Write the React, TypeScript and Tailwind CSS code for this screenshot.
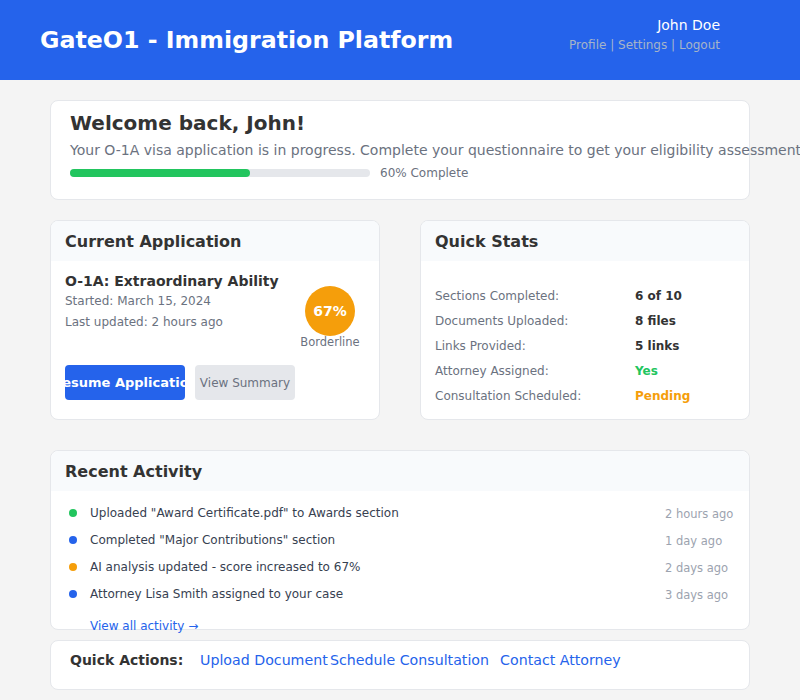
export default function App() {
  const stats = [
    { label: 'Sections Completed:', value: '6 of 10', color: 'text-[#333333]' },
    { label: 'Documents Uploaded:', value: '8 files', color: 'text-[#333333]' },
    { label: 'Links Provided:', value: '5 links', color: 'text-[#333333]' },
    { label: 'Attorney Assigned:', value: 'Yes', color: 'text-[#22c55e]' },
    { label: 'Consultation Scheduled:', value: 'Pending', color: 'text-[#f59e0b]' },
  ]

  const activity = [
    { dot: 'bg-[#22c55e]', text: 'Uploaded "Award Certificate.pdf" to Awards section', time: '2 hours ago' },
    { dot: 'bg-[#2563eb]', text: 'Completed "Major Contributions" section', time: '1 day ago' },
    { dot: 'bg-[#f59e0b]', text: 'AI analysis updated - score increased to 67%', time: '2 days ago' },
    { dot: 'bg-[#2563eb]', text: 'Attorney Lisa Smith assigned to your case', time: '3 days ago' },
  ]

  return (
    <div className="min-h-[700px] bg-[#f4f4f4] font-['DejaVu_Sans',sans-serif] text-[#333333] overflow-hidden">
      <header className="h-20 bg-[#2563eb] flex items-center justify-between pl-10 pr-20">
        <h1 className="text-[23.7px] font-bold text-white mt-[2px]">GateO1 - Immigration Platform</h1>
        <div className="text-right -mt-[10px]">
          <div className="text-sm text-white leading-5">John Doe</div>
          <div className="text-xs text-[#a5b4c8] leading-5">Profile | Settings | Logout</div>
        </div>
      </header>

      <main className="w-[700px] mx-auto pt-5">
        <section className="bg-white border border-[#e5e7eb] rounded-lg h-[100px] pl-[19px] pr-5 pt-[8px]">
          <h2 className="text-xl font-bold leading-7">Welcome back, John!</h2>
          <p className="text-sm text-[#6b7280] whitespace-nowrap leading-6 mt-[1px]">
            Your O-1A visa application is in progress. Complete your questionnaire to get your eligibility assessment.
          </p>
          <div className="flex items-center gap-[10px] mt-[3px]">
            <div className="w-[300px] h-2 bg-[#e5e7eb] rounded-full">
              <div className="w-[60%] h-2 bg-[#22c55e] rounded-full" />
            </div>
            <span className="text-xs text-[#6b7280]">60% Complete</span>
          </div>
        </section>

        <div className="grid grid-cols-2 gap-10 mt-5">
          <section className="bg-white border border-[#e5e7eb] rounded-lg h-[200px] overflow-hidden">
            <div className="bg-[#f8fafc] h-10 px-[14px] flex items-center">
              <h3 className="text-base font-bold mt-[1px]">Current Application</h3>
            </div>
            <div className="px-[14px] pt-[10px]">
              <div className="flex justify-between">
                <div>
                  <div className="text-sm font-bold leading-5">O-1A: Extraordinary Ability</div>
                  <div className="text-xs text-[#6b7280] leading-5">Started: March 15, 2024</div>
                  <div className="text-xs text-[#6b7280] leading-5 mt-[1px]">Last updated: 2 hours ago</div>
                </div>
                <div className="w-[60px] mr-[5px] flex flex-col items-center pt-[15px]">
                  <div className="w-[50px] h-[50px] rounded-full bg-[#f59e0b] text-white font-bold text-sm flex items-center justify-center">67%</div>
                  <div className="text-[11.5px] leading-[13px] text-[#6b7280]">Borderline</div>
                </div>
              </div>
              <div className="flex gap-[10px] mt-[16px]">
                <button className="w-[120px] h-[35px] bg-[#2563eb] text-white text-[13px] font-bold rounded flex items-center justify-center overflow-hidden whitespace-nowrap">
                  Resume Application
                </button>
                <button className="w-[100px] h-[35px] bg-[#e5e7eb] text-[#6b7280] text-xs rounded whitespace-nowrap">
                  View Summary
                </button>
              </div>
            </div>
          </section>

          <section className="bg-white border border-[#e5e7eb] rounded-lg h-[200px] overflow-hidden">
            <div className="bg-[#f8fafc] h-10 px-[14px] flex items-center">
              <h3 className="text-base font-bold mt-[1px]">Quick Stats</h3>
            </div>
            <div className="px-[14px] pt-[22px]">
              {stats.map((s) => (
                <div key={s.label} className="flex h-[25px] items-center text-xs">
                  <span className="w-[200px] text-[#6b7280]">{s.label}</span>
                  <span className={`font-bold ${s.color}`}>{s.value}</span>
                </div>
              ))}
            </div>
          </section>
        </div>

        <section className="bg-white border border-[#e5e7eb] rounded-lg h-[180px] mt-[30px]">
          <div className="bg-[#f8fafc] h-10 px-[14px] flex items-center rounded-t-lg">
            <h3 className="text-base font-bold mt-[1px]">Recent Activity</h3>
          </div>
          <div className="pl-[18px] pr-4 pt-[8px]">
            {activity.map((a) => (
              <div key={a.text} className="flex items-center h-[27px]">
                <span className={`w-2 h-2 rounded-full ${a.dot}`} />
                <span className="ml-[13px] text-xs text-[#374151] flex-1">{a.text}</span>
                <span className="w-[68px] text-[11.5px] text-[#9ca3af] whitespace-nowrap mt-[4px]">{a.time}</span>
              </div>
            ))}
            <a className="block ml-[21px] mt-[11px] text-xs text-[#2563eb]">View all activity →</a>
          </div>
        </section>

        <section className="bg-white border border-[#e5e7eb] rounded-lg h-[50px] mt-[10px] pl-[19px] flex items-start pt-[9px] text-sm leading-5">
          <span className="font-bold w-[130px]">Quick Actions:</span>
          <a className="text-[14.2px] text-[#2563eb] w-[130px] whitespace-nowrap">Upload Document</a>
          <a className="text-[14.2px] text-[#2563eb] mr-[11px] whitespace-nowrap">Schedule Consultation</a>
          <a className="text-[14.2px] text-[#2563eb] whitespace-nowrap">Contact Attorney</a>
        </section>
      </main>
    </div>
  )
}
